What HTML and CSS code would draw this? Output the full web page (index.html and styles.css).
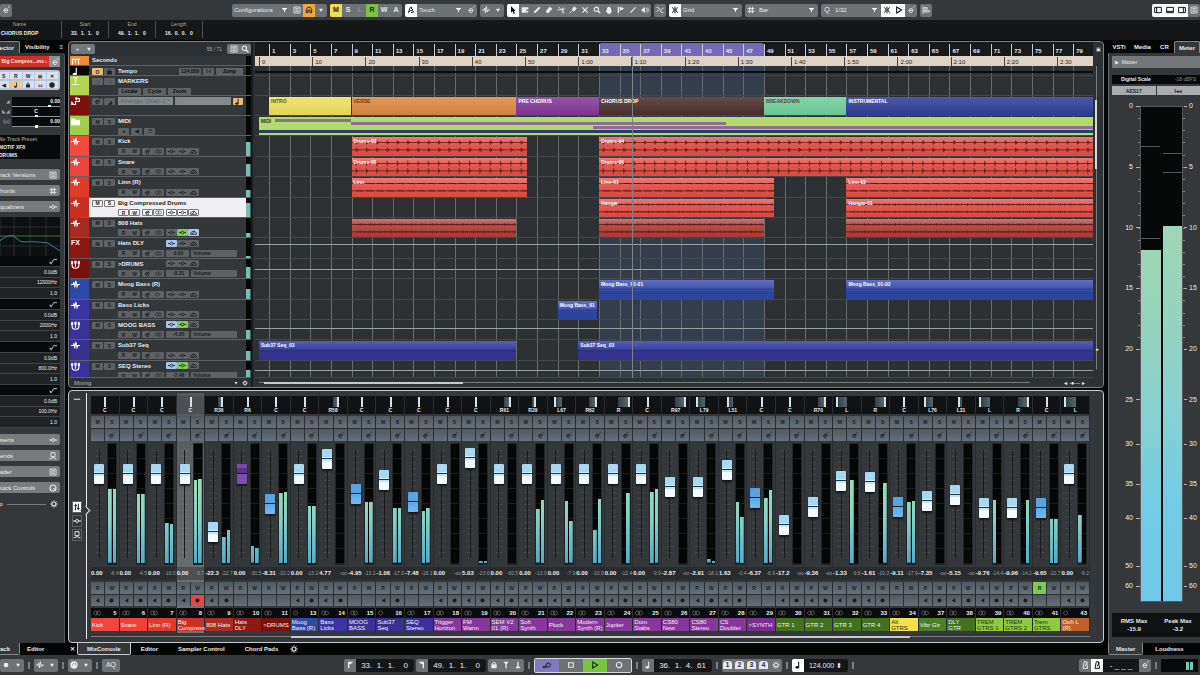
FILE: index.html
```
<!DOCTYPE html>
<html lang="en">
<head>
    <meta charset="UTF-8">
    <meta name="viewport" content="width=device-width, initial-scale=1.0">
    <title>Project - CHORUS DROP</title>
    <link rel="stylesheet" href="styles.css">
</head>
<body>
    <!-- Icon set -->
    <svg class="defs" aria-hidden="true">
        <symbol id="i-e" viewBox="0 0 12 12"><path d="M3 6.500H9A3 3 0 1 0 8.500 8.500M9 2l2-1" fill="none" stroke="currentColor" stroke-width="1.500"/></symbol>
        <symbol id="i-down" viewBox="0 0 12 12"><path d="M3 4h6L6 9z" fill="currentColor"/></symbol>
        <symbol id="i-list" viewBox="0 0 12 12"><path d="M1.500 1.500h9v9h-9zM3.500 4h5M3.500 6h5M3.500 8h5" fill="none" stroke="currentColor" stroke-width="1.300"/></symbol>
        <symbol id="i-house" viewBox="0 0 12 12"><path d="M2 10V5l2-3h4l2 3v5H7.500V6h-3v4z" fill="none" stroke="currentColor" stroke-width="1.500"/></symbol>
        <symbol id="i-auto" viewBox="0 0 12 12"><path d="M2 10 5 2l4 4-4 1M2 10l3-3M6 10l4-1-2-2M7 1v3" fill="none" stroke="currentColor" stroke-width="1.400"/></symbol>
        <symbol id="i-wave" viewBox="0 0 12 12"><path d="M0 6h3l1-3 1 7 1.500-9L8 9l1-3h3" fill="none" stroke="currentColor" stroke-width="1.400"/></symbol>
        <symbol id="i-arrow" viewBox="0 0 12 12"><path d="M3 0v10l2.500-2L7 12l2-1-1.500-3.500H10z" fill="currentColor"/></symbol>
        <symbol id="i-range" viewBox="0 0 12 12"><path d="M1 2h10v3H8v5H1z" fill="currentColor"/><path d="m8 6 4 3-2 .5L9 12z" fill="currentColor"/></symbol>
        <symbol id="i-pencil" viewBox="0 0 12 12"><path d="M1 11l1-3 7-7 2 2-7 7z" fill="currentColor"/></symbol>
        <symbol id="i-eraser" viewBox="0 0 12 12"><path d="M1 8 7 1l4 3-6 7H3z" fill="currentColor"/></symbol>
        <symbol id="i-cut" viewBox="0 0 12 12"><path d="M2 1l7 7M1 6l9-1" stroke="currentColor" stroke-width="1.300"/><circle cx="9.500" cy="4.500" r="1.500" fill="none" stroke="currentColor"/><circle cx="9" cy="9.500" r="1.500" fill="none" stroke="currentColor"/></symbol>
        <symbol id="i-glue" viewBox="0 0 12 12"><path d="M1 11l4-5M5 5l3-4 3 3-4 4z" fill="currentColor" stroke="currentColor" stroke-width="1.200"/></symbol>
        <symbol id="i-x" viewBox="0 0 12 12"><path d="M2 2l8 8M10 2l-8 8" stroke="currentColor" stroke-width="1.800"/></symbol>
        <symbol id="i-zoom" viewBox="0 0 12 12"><circle cx="5" cy="5" r="3.300" fill="none" stroke="currentColor" stroke-width="1.600"/><path d="M7.500 7.500 11 11" stroke="currentColor" stroke-width="2"/></symbol>
        <symbol id="i-hand" viewBox="0 0 12 12"><path d="M3 6V3l1-.5V1.500L5.500 1 7 1.200l1 1 1 .8v4l2-1-2 4-1 1.500H4.500L1 7l1-.5z" fill="currentColor"/></symbol>
        <symbol id="i-comp" viewBox="0 0 12 12"><path d="M1 1h2v10H1zM4 1l7 2.500L4 8z" fill="currentColor"/></symbol>
        <symbol id="i-line" viewBox="0 0 12 12"><path d="M2 10l8-8" stroke="currentColor" stroke-width="1.800"/></symbol>
        <symbol id="i-speaker" viewBox="0 0 12 12"><path d="M1 4h2l3-3v10L3 8H1z" fill="currentColor"/><path d="M8 3q2 3 0 6M10 2q2.500 4 0 8" fill="none" stroke="currentColor"/></symbol>
        <symbol id="i-cross" viewBox="0 0 12 12"><path d="M1 2q4 0 5 4t5 4M1 8l3-2M8 5l3-2" fill="none" stroke="currentColor" stroke-width="1.400"/></symbol>
        <symbol id="i-snap" viewBox="0 0 12 12"><path d="M6 1v10M2 2l3 4-3 4M10 2 7 6l3 4" fill="none" stroke="currentColor" stroke-width="1.500"/></symbol>
        <symbol id="i-grid" viewBox="0 0 12 12"><path d="M4 1v10M8 1v10M1 4h10M1 8h10" stroke="currentColor" stroke-width="1.400"/></symbol>
        <symbol id="i-play" viewBox="0 0 12 12"><path d="M2.500 1.500 10 6l-7.500 4.500z" fill="none" stroke="currentColor" stroke-width="1.600"/></symbol>
        <symbol id="i-align" viewBox="0 0 12 12"><path d="M1.500 0v12M3 2.500h5v2H3zM3 7h8v2H3z" fill="none" stroke="currentColor" stroke-width="1.300"/></symbol>
        <symbol id="i-zl" viewBox="0 0 12 12"><path d="M1 2h10v8H1zM4 2v8" fill="none" stroke="currentColor" stroke-width="1.500"/></symbol>
        <symbol id="i-zb" viewBox="0 0 12 12"><path d="M1 2h10v8H1zM1 8h10" fill="none" stroke="currentColor" stroke-width="1.500"/></symbol>
        <symbol id="i-zr" viewBox="0 0 12 12"><path d="M1 2h10v8H1zM8 2v8" fill="none" stroke="currentColor" stroke-width="1.500"/></symbol>
        <symbol id="i-gear" viewBox="0 0 12 12"><circle cx="6" cy="6" r="3" fill="none" stroke="currentColor" stroke-width="1.800"/><path d="M6 0v2M6 10v2M0 6h2M10 6h2M2 2l1.500 1.500M8.500 8.500 10 10M10 2 8.500 3.500M3.500 8.500 2 10" stroke="currentColor"/></symbol>
        <symbol id="i-knob" viewBox="0 0 12 12"><circle cx="6" cy="6" r="4.500" fill="none" stroke="currentColor" stroke-width="1.600"/><path d="M6 6l3 2" stroke="currentColor" stroke-width="1.600"/></symbol>
        <symbol id="i-midi" viewBox="0 0 12 12"><circle cx="6" cy="6" r="5.500" fill="currentColor"/><path d="M3 6h1M4.500 4h1M8 4h1M8.500 6h1" stroke="#444" stroke-width="1.400"/></symbol>
        <symbol id="i-note" viewBox="0 0 12 12"><path d="M7 1v8" stroke="currentColor" stroke-width="1.600"/><ellipse cx="5" cy="9.500" rx="2.800" ry="2" fill="currentColor"/></symbol>
        <symbol id="i-folder" viewBox="0 0 12 12"><path d="M0 2h5l1 1.500h6V11H0z" fill="currentColor"/></symbol>
        <symbol id="i-group" viewBox="0 0 12 12"><path d="M1.500 1v6q0 4 4.500 4t4.500-4V1M6 5v4" fill="none" stroke="currentColor" stroke-width="1.500"/><path d="M0 2h3v3H0zM4.500 1h3v4h-3zM9 2h3v3H9z" fill="currentColor"/></symbol>
        <symbol id="i-arranger" viewBox="0 0 12 12"><path d="M1 6v4h5V6h5V2H6M8 0 6 2l2 2M3 8l-2 2" fill="none" stroke="currentColor" stroke-width="1.500"/></symbol>
        <symbol id="i-ruler" viewBox="0 0 12 12"><path d="M1 3h11M2 3v7M6 3v5M10 3v7" fill="none" stroke="currentColor" stroke-width="1.600"/></symbol>
        <symbol id="i-marker" viewBox="0 0 12 12"><path d="M6 1v7M3 1h6M2 10h8" fill="none" stroke="currentColor" stroke-width="1.600"/></symbol>
        <symbol id="i-dot" viewBox="0 0 12 12"><circle cx="6" cy="6" r="3.500" fill="currentColor"/></symbol>
        <symbol id="i-left" viewBox="0 0 12 12"><path d="M9 2v8L3 6z" fill="currentColor"/></symbol>
        <symbol id="i-eq" viewBox="0 0 12 12"><path d="M0 6h3M9 6h3M3 6l3-2.500L9 6 6 8.500z" fill="none" stroke="currentColor" stroke-width="1.500"/></symbol>
        <symbol id="i-sq" viewBox="0 0 12 12"><path d="M2.500 2.500h7v7h-7z" fill="none" stroke="currentColor" stroke-width="1.600"/></symbol>
        <symbol id="i-rec" viewBox="0 0 12 12"><circle cx="6" cy="6" r="4" fill="none" stroke="currentColor" stroke-width="1.600"/></symbol>
        <symbol id="i-oo" viewBox="0 0 14 12"><circle cx="4.500" cy="6" r="3.500" fill="none" stroke="currentColor"/><circle cx="9.500" cy="6" r="3.500" fill="none" stroke="currentColor"/></symbol>
        <symbol id="i-o" viewBox="0 0 14 12"><circle cx="4.500" cy="6" r="3.500" fill="none" stroke="currentColor"/></symbol>
        <symbol id="i-send" viewBox="0 0 12 12"><path d="M3 1h6v6H3zM1 10h3l1-2h2l1 2h3" fill="none" stroke="currentColor" stroke-width="1.400"/></symbol>
        <symbol id="i-lane" viewBox="0 0 12 12"><path d="M1 9V7l3-3h4l3 3v2zM3 9l5-5" fill="none" stroke="currentColor" stroke-width="1.400"/></symbol>
        <symbol id="i-lock" viewBox="0 0 12 12"><path d="M2 5h8v6H2z" fill="currentColor"/><path d="M4 5V3q2-3 4 0v2" fill="none" stroke="currentColor" stroke-width="1.500"/></symbol>
        <symbol id="i-flag" viewBox="0 0 12 12"><path d="M3 1h8L7 5H5v6H3z" fill="currentColor"/></symbol>
        <symbol id="i-flag2" viewBox="0 0 12 12"><path d="M9 1H1l4 4h2v6h2z" fill="currentColor"/></symbol>
        <symbol id="i-punch" viewBox="0 0 12 12"><path d="M2 1h8L6 6zM5 5h2v6H5z" fill="currentColor"/></symbol>
        <symbol id="i-cycle" viewBox="0 0 12 12"><path d="M1 9h7q3 0 3-3T8 3 5 6l-1 3M2 7 .5 9 2 11" fill="none" stroke="currentColor" stroke-width="1.500"/></symbol>
        <symbol id="i-metro" viewBox="0 0 12 12"><path d="M3 11 5 1h3l2 10zM6 8l4-6" fill="none" stroke="currentColor" stroke-width="1.500"/></symbol>
        <symbol id="i-faders" viewBox="0 0 12 12"><path d="M4 1v10M8 1v10M2 4h4M6 8h4" stroke="currentColor" stroke-width="1.500"/></symbol>
        <symbol id="i-shelf" viewBox="0 0 12 12"><path d="M1 9h3l3-5h5M1 7l3 4" fill="none" stroke="currentColor" stroke-width="1.200"/></symbol>
    </svg>

    <div class="app">
        <!-- Project toolbar -->
        <header class="toolbar">
            <div class="group"><button aria-label="Edit"><svg><use href="#i-e"/></svg></button></div>
            <div class="toolbar-main">
                <div class="group">
                    <select class="w-config" aria-label="Configurations"><option>Configurations</option></select>
                    <button aria-label="Setup"><svg><use href="#i-list"/></svg></button>
                    <button class="orange" aria-label="Constrain delay"><svg><use href="#i-house"/></svg></button>
                    <button aria-label="More"><svg><use href="#i-down"/></svg></button>
                </div>
                <div class="group">
                    <button class="yellow">M</button><button>S</button><button class="dim">L</button><button class="green">R</button><button>W</button><button>A</button>
                </div>
                <div class="group">
                    <button class="on" aria-label="Automation mode"><svg><use href="#i-auto"/></svg></button>
                    <select class="w-mid" aria-label="Automation"><option>Touch</option></select>
                    <button aria-label="Automation panel"><svg><use href="#i-e"/></svg></button>
                </div>
                <div class="group">
                    <button aria-label="Nudge"><svg><use href="#i-wave"/></svg></button>
                    <button aria-label="More"><svg><use href="#i-down"/></svg></button>
                </div>
                <div class="group">
                    <button class="on" aria-label="Select"><svg><use href="#i-arrow"/></svg></button>
                    <button aria-label="Range"><svg><use href="#i-range"/></svg></button>
                    <button aria-label="Draw"><svg><use href="#i-pencil"/></svg></button>
                    <button aria-label="Erase"><svg><use href="#i-eraser"/></svg></button>
                    <button aria-label="Split"><svg><use href="#i-cut"/></svg></button>
                    <button aria-label="Glue"><svg><use href="#i-glue"/></svg></button>
                    <button aria-label="Mute"><svg><use href="#i-x"/></svg></button>
                    <button aria-label="Zoom"><svg><use href="#i-zoom"/></svg></button>
                    <button aria-label="Hand"><svg><use href="#i-hand"/></svg></button>
                    <button aria-label="Comp"><svg><use href="#i-comp"/></svg></button>
                    <button aria-label="Line"><svg><use href="#i-line"/></svg></button>
                    <button aria-label="Play"><svg><use href="#i-speaker"/></svg></button>
                </div>
                <div class="group"><button aria-label="Zero crossing"><svg><use href="#i-cross"/></svg></button></div>
                <div class="group">
                    <button class="on" aria-label="Snap"><svg><use href="#i-snap"/></svg></button>
                    <select class="w-long" aria-label="Snap type"><option>Grid</option></select>
                </div>
                <div class="group">
                    <button aria-label="Grid"><svg><use href="#i-grid"/></svg></button>
                    <select class="w-long" aria-label="Grid type"><option>Bar</option></select>
                </div>
                <div class="group">
                    <button class="light">Q</button>
                    <select class="w-mid" aria-label="Quantize"><option>1/32</option></select>
                    <button class="on" aria-label="Iterative"><svg><use href="#i-snap"/></svg></button>
                    <button class="on" aria-label="Apply"><svg><use href="#i-play"/></svg></button>
                    <button aria-label="Quantize panel"><svg><use href="#i-e"/></svg></button>
                </div>
                <div class="group"><button aria-label="Align"><svg><use href="#i-align"/></svg></button></div>
            </div>
            <div class="group">
                <button class="on" aria-label="Left zone"><svg><use href="#i-zl"/></svg></button>
                <button class="on" aria-label="Lower zone"><svg><use href="#i-zb"/></svg></button>
                <button class="on" aria-label="Right zone"><svg><use href="#i-zr"/></svg></button>
                <button aria-label="Layout"><svg><use href="#i-list"/></svg></button>
            </div>
        </header>

        <dl class="info">
            <div class="info-name"><dt>Name</dt><dd>CHORUS DROP</dd></div>
            <div><dt>Start</dt><dd>33. &nbsp;1. &nbsp;1. &nbsp; 0</dd></div>
            <div><dt>End</dt><dd>49. &nbsp;1. &nbsp;1. &nbsp; 0</dd></div>
            <div><dt>Length</dt><dd>16. &nbsp;0. &nbsp;0. &nbsp; 0</dd></div>
        </dl>

        <main>
            <!-- Left zone -->
            <aside class="inspector">
                <nav class="tabs"><button class="active">Inspector</button><button>Visibility</button><span>≡</span></nav>
                <div class="inspector-body">
                    <div class="track-title"><span>Big Compres...ms ›</span><button aria-label="Edit channel"><svg><use href="#i-e"/></svg></button></div>
                    <div class="track-buttons">
                        <button>M</button><button>S</button><button>R</button><button>W</button><button>⊟</button><button>✕</button>
                        <button>●</button><button>◀</button><button class="gold" aria-label="Musical"><svg><use href="#i-note"/></svg></button><button aria-label="Lock"><svg><use href="#i-lock"/></svg></button><button>▭</button><button aria-label="Freeze"><svg><use href="#i-midi"/></svg></button>
                    </div>
                    <div class="track-levels">
                        <span>◢</span><div><b>0.00</b><i class="lv-hi"></i></div>
                        <span>◣◢</span><div class="center"><b>C</b><i class="lv-mid"></i></div>
                        <span>(◎)</span><div><b>0.00</b><i class="lv-mid"></i></div>
                    </div>
                    <ul class="preset"><li>No Track Preset</li><li>MOTIF XF8</li><li>DRUMS</li></ul>
                    <button class="section">Track Versions<svg><use href="#i-list"/></svg></button>
                    <button class="section">Chords<svg><use href="#i-grid"/></svg></button>
                    <button class="section">Equalizers<svg><use href="#i-eq"/></svg></button>
                    <svg class="eq-curve" viewBox="0 0 76 39" preserveAspectRatio="none">
                        <path class="eq-grid" d="M16 0V39M30 0V39M46 0V39M62 0V39M0 10H76M0 29H76"/>
                        <path class="eq-zero" d="M0 19H76"/>
                        <path class="eq-line" d="M0 34Q12 26 20 21T32 21T42 25T64 26L76 34"/>
                    </svg>
                    <ul class="eq-bands" id="eq-bands"></ul>
                    <button class="section">Inserts<svg><use href="#i-eq"/></svg></button>
                    <button class="section">Sends<svg><use href="#i-send"/></svg></button>
                    <button class="section">Fader<svg><use href="#i-list"/></svg></button>
                    <button class="section">Quick Controls<svg><use href="#i-knob"/></svg></button>
                    <div class="inspector-foot"><span>Top</span><hr><svg><use href="#i-gear"/></svg></div>
                </div>
                <nav class="tabs tabs-bottom"><button class="active">Track</button><button>Editor</button></nav>
            </aside>

            <div class="center-zone">
                <!-- Project window -->
                <section class="project">
                    <div class="tracklist">
                        <div class="tracklist-head">
                            <span class="mini"><button>+</button><button aria-label="Presets"><svg><use href="#i-down"/></svg></button></span>
                            <span class="count">55 / 71</span>
                            <span class="mini"><button aria-label="Visibility"><svg><use href="#i-list"/></svg></button><button aria-label="Find"><svg><use href="#i-zoom"/></svg></button></span>
                        </div>
                        <div class="rows" id="tracks"></div>
                        <div class="tracklist-foot"><span>Mixing</span><svg><use href="#i-down"/></svg><svg><use href="#i-gear"/></svg></div>
                    </div>
                    <div class="timeline" id="timeline">
                        <div class="bar-ruler" id="bar-ruler"></div>
                        <div class="rows lanes" id="lanes"></div>
                        <div class="hscroll"><i></i><span>◂ -●— ▸</span></div>
                    </div>
                    <div class="vscroll"><button aria-label="Split window">▣</button><i></i><span>●</span></div>
                </section>

                <!-- MixConsole -->
                <section class="mixer">
                    <div class="mixer-side">
                        <button>•••</button>
                        <div>
                            <button class="side-on" aria-label="Faders"><svg><use href="#i-faders"/></svg></button>
                            <button class="side" aria-label="Inserts"><svg><use href="#i-eq"/></svg></button>
                            <button class="side" aria-label="Sends"><svg><use href="#i-send"/></svg></button>
                        </div>
                    </div>
                    <div class="console">
                        <div class="channels" id="channels"></div>
                        <div class="mixer-scroll"><i></i></div>
                    </div>
                </section>
                <nav class="tabs mixer-tabs">
                    <button class="close">✕</button><button class="active">MixConsole</button><button>Editor</button><button>Sampler Control</button><button>Chord Pads</button><button class="tab-gear" aria-label="Settings"><svg><use href="#i-gear"/></svg></button>
                </nav>
            </div>

            <!-- Right zone -->
            <aside class="right-zone">
                <nav class="tabs"><button>VSTi</button><button>Media</button><button>CR</button><button class="active">Meter</button></nav>
                <div class="right-body">
                    <button class="master-title">▶ &nbsp;Master</button>
                    <div class="scale-title"><b>Digital Scale</b><span>-18 dBFS</span></div>
                    <div class="scale-buttons"><button>AES17</button><button>I◂◂</button></div>
                    <div class="master-meter" id="master-meter">
                        <div class="master-bars"><i class="left"></i><i class="right"></i></div>
                    </div>
                    <dl class="peaks"><div><dt>RMS Max</dt><dd>-15.9</dd></div><div><dt>Peak Max</dt><dd>-3.2</dd></div></dl>
                </div>
                <nav class="tabs tabs-bottom"><button class="active">Master</button><button>Loudness</button></nav>
            </aside>
        </main>

        <!-- Transport bar -->
        <footer class="transport">
            <div class="transport-part">
                <div class="group"><button aria-label="Record mode"><svg><use href="#i-dot"/></svg></button><button aria-label="More"><svg><use href="#i-down"/></svg></button></div><s></s>
                <div class="group"><button aria-label="Audio mode"><svg><use href="#i-wave"/></svg></button><button aria-label="More"><svg><use href="#i-down"/></svg></button></div><s></s>
                <div class="group"><button aria-label="Midi mode"><svg><use href="#i-midi"/></svg></button><button aria-label="More"><svg><use href="#i-down"/></svg></button></div><s></s>
                <div class="group"><button class="aq">AQ</button></div>
            </div>
            <div class="transport-part">
                <div class="group"><button aria-label="Left locator"><svg><use href="#i-flag"/></svg></button><output>33. &nbsp;1. &nbsp;1. &nbsp; &nbsp;0</output></div>
                <div class="group"><button aria-label="Right locator"><svg><use href="#i-flag2"/></svg></button><output>49. &nbsp;1. &nbsp;1. &nbsp; &nbsp;0</output></div>
                <div class="group"><button aria-label="Lock"><svg><use href="#i-lock"/></svg></button><button aria-label="Punch in"><svg><use href="#i-punch"/></svg></button><button aria-label="Punch out"><svg class="flip"><use href="#i-punch"/></svg></button></div><s></s>
                <div class="group play">
                    <button class="violet" aria-label="Cycle"><svg><use href="#i-cycle"/></svg></button>
                    <button aria-label="Stop"><svg><use href="#i-sq"/></svg></button>
                    <button class="green" aria-label="Play"><svg><use href="#i-play"/></svg></button>
                    <button aria-label="Record"><svg><use href="#i-rec"/></svg></button>
                </div><s></s>
                <div class="group"><button aria-label="Time format"><svg><use href="#i-note"/></svg></button><output>36. &nbsp;1. &nbsp;4. &nbsp;61</output></div><s></s>
                <div class="group markers"><button><b>1</b></button><button><b>2</b></button><button><b>3</b></button><button><b>4</b></button><button aria-label="Markers"><svg><use href="#i-gear"/></svg></button></div><s></s>
                <div class="group"><button class="on" aria-label="Tempo"><svg><use href="#i-note"/></svg></button><output class="tempo">124.000 ⬍</output></div><s></s>
            </div>
            <div class="transport-part transport-right">
                <div class="group"><button aria-label="Precount"><svg><use href="#i-metro"/></svg></button><button class="on" aria-label="Click"><svg><use href="#i-metro"/></svg></button><output class="click">- _ _ _</output><button aria-label="Click setup"><svg><use href="#i-e"/></svg></button></div><s></s>
                <div class="out-meter"><i></i><i></i></div>
            </div>
        </footer>
    </div>
    <script src="script.js"></script>
</body>
</html>
```

FILE: styles.css
```
* {
    box-sizing: border-box;
}
body {
    margin: 0;
    background: #050606;
    color: #e9ebec;
    font-family: "Liberation Sans", Arial, sans-serif;
    font-size: 6px;
    line-height: 8px;
    overflow: hidden;
}
button, select, input, output {
    font: inherit;
    color: inherit;
    border: 0;
    padding: 0;
    margin: 0;
    background: none;
}
button {
    display: flex;
    align-items: center;
    justify-content: center;
    white-space: nowrap;
    overflow: hidden;
}
ul, dl, dd {
    margin: 0;
    padding: 0;
    list-style: none;
}
svg {
    width: 8px;
    height: 8px;
    flex: none;
}
.defs {
    display: none;
}
.app {
    height: 100vh;
    min-height: 640px;
    display: grid;
    grid-template-rows: 20px 20px minmax(0, 1fr) 20px;
}

/* toolbar */
.toolbar {
    display: flex;
    justify-content: space-between;
    align-items: center;
    background: #34383a;
}
.toolbar-main, .transport-part {
    display: flex;
    align-items: center;
    gap: 3px;
}
.group {
    display: flex;
    height: 13px;
    background: #6e7274;
    border-radius: 2px;
    overflow: hidden;
    font-size: 7px;
    font-weight: bold;
}
.group button {
    width: 12px;
    height: 13px;
}
.group button.on {
    background: #fff;
    color: #111;
}
.group button.orange {
    background: #f2a73b;
    color: #222;
}
.group button.yellow {
    background: #eddd4f;
    color: #222;
}
.group button.green {
    background: #76c442;
    color: #12300a;
}
.group button.violet {
    background: #8378bd;
    color: #15132a;
}
.group button.dim {
    color: #8b8f91;
}
.group button.light {
    font-weight: normal;
}
select {
    appearance: none;
    height: 13px;
    padding: 0 2px;
    font-size: 6px;
    font-weight: normal;
    background: conic-gradient(from -32deg at 50% 100%, #eee 64deg, transparent 0) no-repeat right 4px center / 5px 4px;
}
.w-config {
    width: 59px;
}
.w-mid {
    width: 48px;
}
.w-long {
    width: 61px;
}

/* info line */
.info {
    display: flex;
    background: #151718;
    text-align: center;
    padding-top: 1px;
}
.info div {
    width: 47px;
    height: 17px;
    border-right: 1px solid #4b4f51;
}
.info .info-name {
    width: 62px;
    padding-right: 22px;
}
.info dt {
    font-size: 5px;
    line-height: 7px;
    color: #a8abad;
}
.info dd {
    font-size: 5px;
    font-weight: bold;
    line-height: 10px;
    white-space: nowrap;
}

main {
    display: grid;
    grid-template-columns: 66px minmax(0, 1fr) 94px;
    min-height: 0;
    background: #050606;
}

/* tabs */
.tabs {
    display: flex;
    height: 12px;
    align-items: center;
    font-weight: bold;
    background: #050606;
}
.tabs button {
    height: 12px;
    padding: 0 7px;
}
.tabs .active {
    background: #34383a;
    border: 1px solid #84888a;
    border-bottom: 0;
    border-radius: 2px 2px 0 0;
}
.tabs-bottom .active, .mixer-tabs .active {
    border: 1px solid #84888a;
    border-top: 0;
    border-radius: 0 0 2px 2px;
}

/* inspector */
.inspector {
    margin-left: -16px;
    padding-top: 1px;
    display: flex;
    flex-direction: column;
    min-height: 0;
}
.inspector .tabs button {
    padding: 0 5px;
}
.inspector .tabs .active {
    width: 36px;
    justify-content: flex-end;
}
.inspector .tabs span {
    margin-left: auto;
    padding-right: 3px;
}
.inspector .tabs-bottom .active {
    padding-right: 9px;
}
.inspector .tabs-bottom button {
    padding-left: 7px;
}
.inspector-body {
    flex: 1;
    min-height: 0;
    background: #34383a;
    padding: 3px 4px 0 0;
    margin-right: 1px;
    border-right: 1px solid #55595b;
    border-radius: 0 3px 0 0;
}
.track-title {
    display: flex;
    height: 11px;
    margin-bottom: 3px;
}
.track-title span {
    flex: 1;
    padding-right: 2px;
    background: #d32f22;
    text-align: right;
    font-size: 5px;
    line-height: 11px;
    font-weight: bold;
    white-space: nowrap;
}
.track-title button {
    width: 11px;
    background: #8c9092;
}
.track-buttons {
    display: grid;
    grid-template-columns: repeat(6, 1fr);
    gap: 2px 1px;
    padding: 2px;
    height: 20px;
    background: #b9c5dc;
    border-radius: 3px;
    margin-bottom: 7px;
}
.track-buttons button {
    font-size: 5px;
    font-weight: bold;
    color: #222;
    background: #d9e0ec;
}
.track-buttons svg {
    width: 6px;
    height: 6px;
}
.track-buttons .gold {
    background: #f0cb80;
}
.track-levels {
    display: grid;
    grid-template-columns: 26px 1fr;
    grid-auto-rows: 10px;
    margin-bottom: 8px;
    font-size: 5px;
    text-align: right;
    color: #a2a6a8;
    column-gap: 2px;
}
.track-levels div {
    background: #0a0b0c;
    border-bottom: 1px solid #8b8f91;
    color: #eee;
    position: relative;
}
.track-levels .center {
    text-align: center;
}
.track-levels i {
    position: absolute;
    bottom: -2px;
    width: 3px;
    height: 3px;
    background: #fff;
}
.lv-hi {
    left: 75%;
}
.lv-mid {
    left: 48%;
}
.preset {
    background: #08090a;
    margin-bottom: 10px;
    padding-left: 15px;
    font-size: 5px;
    line-height: 8px;
    height: 24px;
}
.preset li:first-child {
    color: #909496;
}
.preset li {
    font-weight: bold;
    white-space: nowrap;
}
.section {
    width: 100%;
    height: 11px;
    margin-bottom: 5px;
    padding: 0 3px 0 12px;
    justify-content: space-between;
    background: #777b7d;
    border-radius: 2px;
}
.eq-curve {
    display: block;
    width: 100%;
    height: 39px;
    background: #0d0f10;
}
.eq-grid {
    stroke: #2b2f31;
    fill: none;
}
.eq-zero {
    stroke: #3d7a34;
    fill: none;
}
.eq-line {
    stroke: #3e7f9d;
    fill: none;
}
.eq-bands {
    display: grid;
    grid-template-rows: repeat(16, 1fr);
    height: 172px;
    margin-bottom: 6px;
}
.eq-bands li {
    display: flex;
    align-items: center;
    justify-content: flex-end;
    padding-right: 3px;
    font-size: 5px;
    border-bottom: 1px solid #3f4345;
    background: #202325;
}
.eq-bands .band {
    background: #08090a;
}
.inspector-foot {
    display: flex;
    align-items: center;
    gap: 4px;
    padding: 2px 2px 0 9px;
}
.inspector-foot hr {
    flex: 1;
    margin: 0;
    border: 0;
    border-top: 1px solid #777b7d;
}

.center-zone {
    display: grid;
    grid-template-rows: minmax(0, 1fr) 253px 12px;
    padding: 0 2px;
    min-width: 0;
    min-height: 0;
}

/* project */
.project {
    display: grid;
    grid-template-columns: 183px minmax(0, 1fr) 9px;
    column-gap: 1px;
    margin: 1px 0 2px;
    border: 1px solid #7b7f81;
    padding-left: 1px;
    border-radius: 4px;
    background: #2d3133;
    min-height: 0;
    overflow: hidden;
}
.tracklist, .timeline {
    display: grid;
    grid-template-rows: 14px minmax(0, 1fr) 9px;
    min-height: 0;
    min-width: 0;
}
.tracklist {
    border-right: 2px solid #1a1c1d;
}
.timeline {
    margin-left: 1px;
    overflow: hidden;
}
.rows {
    display: grid;
    grid-template-rows: 10px 10px 20px 20px repeat(12, minmax(0, 20fr)) minmax(0, 17fr);
    min-height: 0;
}
.tracklist-head {
    display: flex;
    align-items: center;
    gap: 4px;
}
.mini {
    display: flex;
    height: 10px;
    background: #74787a;
    border-radius: 2px;
    padding: 0 1px;
    margin-left: 1px;
}
.mini button {
    width: 11px;
}
.count {
    margin-left: auto;
    font-size: 5px;
    color: #aaadaf;
}
.tracklist-foot {
    display: flex;
    align-items: center;
    gap: 3px;
    padding-right: 3px;
}
.tracklist-foot svg {
    width: 6px;
    height: 6px;
}
.tracklist-foot span {
    flex: 1;
    padding-left: 4px;
    color: #b4b7b9;
}
.track {
    display: grid;
    grid-template-columns: 19px 23px minmax(0, 1fr) 5px;
    column-gap: 3px;
    border-bottom: 1px solid #5c6062;
    background: #33373a;
    overflow: hidden;
    min-height: 0;
}
.track-color {
    padding: 1px 0 0 1px;
    color: #fff;
    font-size: 7px;
    font-weight: bold;
    margin-bottom: -1px;
}
.track-color svg {
    width: 9px;
    height: 9px;
}
.ms {
    display: flex;
    gap: 1px;
    padding-top: 2px;
}
.track-line {
    display: flex;
    gap: 2px;
    height: 10px;
    align-items: center;
    white-space: nowrap;
}
.track-line b {
    min-width: 46px;
}
.track-line .tempo-name {
    min-width: 59px;
}
.track button, .cell {
    width: 11px;
    height: 7px;
    font-size: 5px;
    font-weight: bold;
    color: #1b1d1e;
    background: #5e6264;
    border-radius: 1px;
}
.track button svg {
    width: 7px;
    height: 7px;
}
.track select {
    width: 59px;
    height: 8px;
    color: #606466;
    background: #85898b;
}
.btns {
    display: flex;
}
.track .cell {
    width: 46px;
    padding-left: 2px;
    line-height: 7px;
}
.track .val {
    width: 23px;
    text-align: center;
}
.track .blue {
    background: #a9c4ee;
}
.track .lime {
    background: #7ecb5c;
}
.track .gold {
    background: #eab97e;
}
.track .wide {
    width: 23px;
    color: #0b0c0c;
}
.track .jump {
    width: 28px;
}
.track.selected {
    background: #f1eff0;
    color: #222;
}
.track.selected button {
    background: #f8f8f8;
    border: 1px solid #777;
}
.track-meter {
    display: flex;
    align-items: flex-end;
    background: #060707;
}
.track-meter i {
    width: 100%;
    background: #76bdb5;
    border-right: 1px solid #38605b;
}

/* timeline */
.bar-ruler, .lane {
    position: relative;
    min-height: 0;
}
.bar-ruler {
    background: #17191b;
}
.bar-ruler span, .seconds span {
    position: absolute;
    top: 2px;
    bottom: 0;
    padding-left: 2px;
    border-left: 1px solid #c9cccd;
    line-height: 15px;
    font-weight: bold;
}
.bar-ruler .cycle {
    position: absolute;
    top: 1px;
    bottom: 0;
    background: #7369b5;
    border-radius: 3px 3px 0 0;
}
.lane {
    border-bottom: 1px solid #44484a;
}
.lane.seconds {
    background: #ddd2c4;
    border: 0;
    overflow: hidden;
}
.seconds span {
    top: 1px;
    font-weight: normal;
    line-height: 10px;
    color: #222;
    border-color: #444;
}
.lanes {
    position: relative;
}
.gridline, .cycle-area, .playhead {
    position: absolute;
    top: 10px;
    bottom: 0;
    width: 1px;
    background: #666b6d;
}
.cycle-area {
    background: #343d4b;
    width: auto;
}
.playhead {
    top: 0;
    background: #7d8284;
}
.automation {
    position: absolute;
    left: 0;
    right: 0;
    height: 1px;
    background: #9a9fa0;
}
.tempo-line {
    background: #0b0c0c;
    height: 2px;
}
.clip {
    position: absolute;
    top: 1px;
    bottom: 0;
    overflow: hidden;
    font-size: 5px;
    font-weight: bold;
    color: #fff;
    white-space: nowrap;
}
.clip span {
    position: relative;
    padding: 0 2px;
}
.clip svg {
    position: absolute;
    inset: 0;
    width: 100%;
    height: 100%;
}
.clip path {
    fill: none;
    stroke: rgba(80, 20, 20, .7);
    vector-effect: non-scaling-stroke;
}
.clip.red {
    background: linear-gradient(#ec7a75, #e0574f 45%, #d74b40);
}
.clip.dark {
    background: linear-gradient(#c77872 0, #b44f48 35%, #a93a31);
}
.clip.blue {
    background: linear-gradient(#6070c2, #3d51a8 55%, #2b449e 60%, #2b449e);
}
.clip.indigo {
    background: linear-gradient(#5560b8, #3c429f 45%, #2c2e80 50%, #35338f 60%, #33318f);
}
.clip.blue path, .clip.indigo path {
    stroke: #2c357e;
}
.clip.part {
    background: linear-gradient(rgba(255, 255, 255, .14), rgba(0, 0, 0, .05)), var(--part);
}
.clip.shade {
    color: rgba(60, 40, 20, .8);
}
.midi-part {
    background: #b3da70;
    color: #35451c;
}
.midi-part i {
    position: absolute;
    height: 3px;
    background: #8d6f8f;
}
.midi-part .navy {
    background: #2b3f68;
    border-top: 1px solid #b8c3b0;
    height: 4px;
}
.hscroll {
    display: flex;
    align-items: center;
    justify-content: space-between;
    padding-right: 8px;
    background: linear-gradient(#777b7d, #777b7d) no-repeat 4px 4px / 92% 1px;
}
.hscroll i {
    width: 24%;
    height: 2px;
    margin-left: 9px;
    background: #c6c9ca;
}
.vscroll {
    display: flex;
    flex-direction: column;
    align-items: center;
    font-size: 5px;
    padding-top: 3px;
    background: linear-gradient(#777b7d, #777b7d) no-repeat 2px 24px / 1px 88%;
}
.vscroll i {
    width: 2px;
    height: 69px;
    margin: 47px auto auto 1px;
    background: #d6d9da;
}
.vscroll span {
    margin: 0 3px 34px 0;
}

/* mixer */
.mixer {
    display: grid;
    grid-template-columns: 17px minmax(0, 1fr);
    gap: 4px;
    padding: 2px 13px 0 1px;
    background: #34383a;
    border: 1px solid #c8cccd;
    border-radius: 4px;
}
.mixer-side {
    border-right: 1px solid #e3e5e6;
    margin-bottom: 3px;
    display: grid;
    grid-template-rows: 108px auto;
    position: relative;
}
.mixer-side::after {
    content: "";
    position: absolute;
    right: -3px;
    top: 114px;
    width: 5px;
    height: 5px;
    border: 1px solid #e3e5e6;
    border-left-color: #34383a;
    border-bottom-color: #34383a;
    background: #34383a;
    transform: rotate(45deg);
}
.mixer-side > button {
    height: 12px;
    width: 14px;
}
.side, .side-on {
    width: 10px;
    height: 12px;
    margin: 0 0 2px 2px;
    border: 1px solid #5c6062;
}
.side-on {
    background: #fff;
    color: #222;
}
.channels {
    display: grid;
    grid-template-columns: repeat(35, minmax(0, 1fr));
}
.channel {
    display: grid;
    grid-template-rows: 18px 25px 122px 13px 24px 10px 13px;
    grid-template-columns: minmax(0, 1fr);
    row-gap: 2px;
    padding-top: 3px;
    border-right: 1px solid #2a2d2f;
    min-width: 0;
}
.channel.selected {
    background: linear-gradient(#54585a, #717476);
}
.pan {
    background: #111213;
    text-align: center;
    position: relative;
    padding-top: 11px;
    font-size: 5px;
    line-height: 7px;
    font-weight: bold;
}
.selected .pan {
    background: #4c5052;
}
.pan i {
    position: absolute;
    top: 1px;
    height: 10px;
    min-width: 2px;
    background: linear-gradient(90deg, #31414a, #56666e);
    border: 0 solid #d5e3e6;
}
.pan .r {
    left: 48%;
    border-right-width: 2px;
}
.pan .l {
    right: 48%;
    border-left-width: 2px;
}
.keys {
    display: grid;
    grid-template: repeat(2, 1fr) / repeat(2, 1fr);
    gap: 1px;
    background: #2b2f32;
}
.keys button {
    font-size: 5px;
    font-weight: bold;
    color: #1b1e20;
    background: linear-gradient(#515960, #66707a);
}
.keys svg {
    width: 7px;
    height: 7px;
}
.keys .rec {
    background: #e24940;
}
.keys .read {
    background: #7dcb52;
}
.strip {
    display: grid;
    grid-template-columns: 10px 10px;
    column-gap: 3px;
    padding-left: 3px;
}
.fader {
    appearance: none;
    writing-mode: vertical-lr;
    direction: rtl;
    width: 10px;
    height: 122px;
    background:
        linear-gradient(#191b1d, #191b1d) no-repeat center / 1px 108px,
        repeating-linear-gradient(rgba(200, 210, 215, .1) 0 1px, transparent 1px 6px) no-repeat center / 6px 108px;
}
.fader::-webkit-slider-thumb {
    appearance: none;
    width: 10px;
    height: 20px;
    border-radius: 1px;
    background: linear-gradient(#a7d8f2 0 40%, #d2ecf7 40% 47%, #234 47% 52%, #c3e6f6 52% 62%, #f2fafd 62%);
    box-shadow: 0 2px 2px #151718;
}
.fader.group-fader::-webkit-slider-thumb {
    background: linear-gradient(#5aa3e0 0 47%, #123 47% 52%, #5fa9e4 52%, #74baf0);
}
.fader.fx::-webkit-slider-thumb {
    background: linear-gradient(#7b4aa8 0 20%, #5c338a 20% 47%, #213 47% 52%, #7c4dad 52%);
}
.meter {
    display: flex;
    align-items: flex-end;
    gap: 1px;
    padding-bottom: 1px;
    border: 1px solid #222527;
    background: repeating-linear-gradient(#050606 0 14px, #191b1c 14px 15px);
}
.meter i {
    flex: 1;
    background: linear-gradient(#9fe0b4, #88d2c4 50%, #55abc8) no-repeat bottom / 100% 90px;
}
.values {
    display: flex;
    justify-content: space-between;
    line-height: 13px;
    background: #292c2f;
    white-space: nowrap;
}
.values span {
    font-size: 5px;
    color: #9a9ea0;
}
.selected .values {
    background: #4c5052;
}
.chan-num {
    display: flex;
    justify-content: space-between;
    align-items: center;
    padding: 0 2px;
    font-weight: bold;
    background: #0a0b0c;
}
.chan-num svg {
    color: #82868a;
}
.chan-name {
    display: flex;
    align-items: center;
    height: 13px;
    padding-left: 1px;
    margin-top: -2px;
    line-height: 6px;
    white-space: pre;
}
.mixer-scroll {
    margin-top: 3px;
    border-top: 1px solid #777b7d;
}
.mixer-scroll i {
    display: block;
    width: 62%;
    height: 2px;
    margin: -1px 0 0 20%;
    background: #c6c9ca;
}
.mixer-tabs button {
    padding: 0 10px;
}
.mixer-tabs .active {
    padding: 0 9px;
    border-color: #c8cccd;
}
.mixer-tabs .close {
    padding: 0 2px;
}
.mixer-tabs .tab-gear {
    padding: 0 2px;
}

/* right zone */
.right-zone {
    display: flex;
    flex-direction: column;
    min-height: 0;
    padding: 1px 0 0 2px;
    overflow: hidden;
}
.right-zone .tabs-bottom button {
    padding: 0 12px;
}
.right-zone .tabs-bottom .active {
    padding: 0 7px;
}
.right-body {
    flex: 1;
    display: flex;
    flex-direction: column;
    min-height: 0;
    padding: 3px 0 6px 3px;
    background: #34383a;
    border-left: 1px solid #666a6c;
}
.master-title {
    height: 12px;
    justify-content: flex-start;
    padding-left: 3px;
    font-size: 5px;
    background: #74787a;
}
.scale-title {
    display: flex;
    justify-content: space-between;
    margin-top: 7px;
    padding: 0 4px 0 9px;
    font-size: 5px;
    line-height: 9px;
    background: #08090a;
    white-space: nowrap;
}
.scale-title span {
    color: #85898b;
}
.scale-buttons {
    display: grid;
    grid-template-columns: 1fr 1fr;
    gap: 1px;
    margin: 2px 0 11px;
}
.scale-buttons button {
    height: 9px;
    font-size: 5px;
    font-weight: bold;
    color: #222;
    background: #a9acae;
}
.master-meter {
    flex: 1;
    position: relative;
    min-height: 0;
    font-size: 7px;
}
.master-bars {
    position: absolute;
    inset: 0 17px 0 28px;
    display: grid;
    grid-template-columns: 1fr 1fr;
    gap: 2px;
    border: 1px solid #55595b;
    background: #070808;
}
.master-bars i {
    align-self: end;
    background: linear-gradient(#9fd6b6, #93d2c0 30%, #88d0d2 48%, #72cce6 75%, #6fc9e6);
}
.master-bars .left {
    height: 71%;
}
.master-bars .right {
    height: 76%;
}
.mark {
    position: absolute;
    left: 0;
    right: -1px;
    display: flex;
    justify-content: space-between;
    align-items: center;
    height: 8px;
    margin-top: -4px;
}
.mark span {
    width: 21px;
    text-align: right;
}
.mark span:last-child {
    width: 12px;
    text-align: left;
}
.mark::before, .mark::after, .tick::before, .tick::after {
    content: "";
    position: absolute;
    left: 24px;
    width: 4px;
    height: 1px;
    background: #aeb2b4;
}
.mark::after, .tick::after {
    left: auto;
    right: 14px;
    width: 3px;
}
.tick {
    position: absolute;
    left: 2px;
    right: 1px;
}
.tick::before, .tick::after {
    width: 2px;
    background: #82868a;
}
.hold {
    position: absolute;
    width: 19px;
    height: 1px;
    background: #53585a;
}
.hold-left {
    left: 29px;
}
.hold-right {
    right: 18px;
}
.peaks {
    display: grid;
    grid-template-columns: 1fr 1fr;
    margin-top: 11px;
    padding-top: 4px;
    height: 24px;
    text-align: center;
    font-weight: bold;
    background: #101112;
}

/* transport */
.transport {
    display: flex;
    justify-content: space-between;
    align-items: center;
    background: #34383a;
}
.transport-part {
    gap: 2px;
}
.transport s {
    width: 2px;
    height: 7px;
    margin: 0 2px;
    background: #777b7d;
}
.transport .aq {
    width: 18px;
    font-weight: normal;
}
.transport output {
    width: 58px;
    text-align: center;
    font-size: 8px;
    line-height: 13px;
    font-weight: normal;
    background: #141617;
    white-space: nowrap;
}
.transport .tempo {
    width: 44px;
    font-size: 7px;
}
.transport .click {
    width: 36px;
}
.transport .play {
    height: 15px;
    border: 1px solid #d7dadb;
}
.play button {
    width: 24px;
}
.flip {
    transform: rotate(180deg);
}
.markers b {
    width: 9px;
    height: 8px;
    background: #e6e8e9;
    color: #333;
    border-radius: 3px 3px 0 0;
}
.out-meter {
    display: flex;
    justify-content: flex-end;
    align-items: flex-end;
    gap: 1px;
    width: 37px;
    height: 13px;
    padding: 0 5px 2px;
    margin-right: 2px;
    background: #08090a;
}
.out-meter i {
    width: 3px;
    height: 8px;
    background: #76c9b8;
}
```

FILE: script.js
```
const FIRST_BAR = -0.36;
const BARS = 81.28;
const pos = bar => (bar - FIRST_BAR) / BARS * 100;
const icon = name => `<svg><use href="#i-${name}"/></svg>`;

// EQ bands
document.getElementById('eq-bands').innerHTML = ['12000Hz', '2000Hz', '800.0Hz', '100.0Hz'].map(freq =>
    `<li class="band">${icon('shelf')}</li><li>0.0dB</li><li>${freq}</li><li>1.0</li>`
).join('');

// parts: [bar from, bar to, label, colour, dark text]
// clips: [bar from, bar to, label, style, waveform]
const tracks = [
    { name: 'Seconds', color: '#f08a34', icon: 'ruler', kind: 'ruler' },
    { name: 'Tempo', color: '#050606', icon: 'note', kind: 'tempo' },
    { name: 'MARKERS', color: '#b5d352', icon: 'marker', kind: 'markers' },
    { name: 'Arranger Chain 1', color: '#7c100e', icon: 'arranger', kind: 'arranger', parts: [
        [1, 9, 'INTRO', '#efdf5b', 1], [9, 25, 'VERSE', '#dd883f', 1], [25, 33, 'PRE CHORUS', '#83389a', 0],
        [33, 49, 'CHORUS DROP', '#4a2f2d', 0], [49, 57, 'BREAKDOWN', '#6fcf9b', 1], [57, 81, 'INSTRUMENTAL', '#2e3d9a', 0]
    ] },
    { name: 'MIDI', color: '#9fcf4c', icon: 'folder', kind: 'folder' },
    { name: 'Kick', color: '#f5483f', icon: 'wave', meter: 70, clips: [[9, 26, 'Drums-03', 'red', 'kick'], [33, 81, 'Drums-04', 'red', 'kick']] },
    { name: 'Snare', color: '#ee433a', icon: 'wave', meter: 62, clips: [[9, 26, 'Drums-05', 'red', 'snare'], [33, 81, 'Drums-06', 'red', 'snare']] },
    { name: 'Linn (R)', color: '#df3b2b', icon: 'wave', meter: 34, clips: [[9, 26, 'Linn', 'red', 'thin'], [33, 50, 'Linn-01', 'red', 'thin'], [57, 81, 'Linn-02', 'red', 'thin']] },
    { name: 'Big Compressed Drums', color: '#cb3025', icon: 'wave', meter: 72, selected: true, clips: [[33, 50, 'Hangar', 'red', 'dense'], [57, 81, 'Hangar-01', 'red', 'dense']] },
    { name: '808 Hats', color: '#a82b1f', icon: 'wave', meter: 26, eq: ['', 'lime', 'blue'], clips: [[9, 25, '', 'dark', 'dense'], [33, 49, '', 'dark', 'dense'], [57, 81, '', 'dark', 'dense']] },
    { name: 'Hats DLY', color: '#8b1813', icon: 'FX', meter: 14, value: '0.00', eq: ['blue', '', ''], line: 27 },
    { name: '>DRUMS', color: '#7a0f0d', icon: 'group', meter: 58, value: '-8.31', eq: ['', '', ''], line: 52 },
    { name: 'Moog Bass (R)', color: '#2d4ba6', icon: 'wave', meter: 50, mono: true, clips: [[33, 50, 'Moog Bass_01-01', 'blue', 'bass'], [57, 81, 'Moog Bass_01-02', 'blue', 'bass']] },
    { name: 'Bass Licks', color: '#3a35a0', icon: 'wave', meter: 0, clips: [[29, 32.8, 'Moog Bass_01', 'blue', 'bass']] },
    { name: 'MOOG BASS', color: '#3a3296', icon: 'group', meter: 50, value: '-4.95', eq: ['blue', 'lime', ''], line: 43 },
    { name: 'Sub37 Seq', color: '#39308f', icon: 'wave', meter: 46, mono: true, clips: [[0, 25, 'Sub37 Seq_03', 'indigo', 'bass'], [31, 81, 'Sub37 Seq_03', 'indigo', 'bass']] },
    { name: 'SEQ Stereo', color: '#3c319c', icon: 'group', meter: 52, value: '-7.48', eq: ['blue', 'lime', ''], line: 60 }
];

function trackBody(t) {
    const name = `<b>${t.name}</b>`;
    const ms = '<div class="ms"><button>M</button><button>S</button></div>';
    if (t.kind === 'ruler') {
        return [name, ''];
    }
    if (t.kind === 'tempo') {
        return [`<div class="ms"><button class="gold">O</button><button>${icon('lock')}</button></div>`,
            `<div class="track-line"><b class="tempo-name">Tempo</b><button class="wide">124.000</button><button>I-I</button><button class="wide jump">Jump</button></div>`];
    }
    if (t.kind === 'markers') {
        return ['<div class="ms"><button>⁘</button><button>⁘</button></div>',
            `<div class="track-line">${name}</div><div class="track-line"><button class="wide">Locate</button><button class="wide">Cycle</button><button class="wide">Zoom</button></div>`];
    }
    if (t.kind === 'arranger') {
        return [`<div class="ms"><button>${icon('e')}</button><button>◢</button></div>`,
            `<div class="track-line"><select aria-label="Chain"><option>${t.name} *</option></select><select aria-label="Event"><option>-</option></select><button class="gold">${icon('note')}</button></div>`];
    }
    if (t.kind === 'folder') {
        return [ms, `<div class="track-line">${name}</div><div class="track-line"><button>●</button><button>◀</button><button>☰</button></div>`];
    }
    const colors = t.eq || ['', '', ''];
    const eq = `<div class="btns"><button class="${colors[0]}">${icon('eq')}</button><button class="${colors[1]}">${icon('eq')}</button><button class="${colors[2]}">${icon('lane')}</button></div>`;
    const rw = `<div class="btns"><button>R</button><button>W</button></div><div class="btns"><button>${icon('e')}</button><button>${icon(t.mono ? 'o' : 'oo')}</button></div>`;
    if (t.value) {
        return [ms, `<div class="track-line">${name}${eq}</div><div class="track-line">${rw}<span class="cell val">${t.value}</span><span class="cell">Volume</span></div>`];
    }
    return [ms, `<div class="track-line">${name}</div><div class="track-line">${rw}${eq}</div>`];
}

document.getElementById('tracks').innerHTML = tracks.map(t => {
    const [ms, body] = trackBody(t);
    return `<div class="track ${t.selected ? 'selected' : ''}">
        <div class="track-color" style="background:${t.color}">${t.icon === 'FX' ? 'FX' : icon(t.icon)}</div>
        <div>${ms}</div><div>${body}</div>
        <div class="track-meter"><i style="height:${t.meter || 0}%"></i></div>
    </div>`;
}).join('');

// Waveforms, drawn as two channels in a box 20 high
function wave(type, bars) {
    const w = Math.round(bars * 10);
    let d = '';
    [6, 14].forEach(y => {
        d += `M0 ${y}H${w}`;
        for (let x = 4, n = 0; x < w; n++) {
            if (type === 'kick') {
                d += `M${x} ${y - 2}l2 2l-2 2z`;
                x += 10;
            } else if (type === 'snare') {
                d += `M${x} ${y - 3}v6M${x + 1} ${y - 1}v2`;
                x += 10;
            } else if (type === 'dense') {
                const h = 1 + (n * 7 % 5) / 2;
                d += `M${x} ${y - h / 2}v${h}`;
                x += 2;
            } else if (type === 'thin') {
                d += `M${x} ${y}h6v1`;
                x += 10;
            } else {
                x += w;
            }
        }
    });
    if (type === 'bass') {
        d = `M0 10H${w}`;
    }
    return `<svg viewBox="0 0 ${w} 20" preserveAspectRatio="none"><path d="${d}"/></svg>`;
}

const span = (a, b) => `left:${pos(a)}%;width:${(b - a) / BARS * 100}%`;

function laneContent(t) {
    if (t.kind === 'ruler') {
        let out = '';
        for (let s = 0; s <= 150; s += 10) {
            const label = s < 60 ? s : Math.floor(s / 60) + ':' + String(s % 60).padStart(2, '0');
            out += `<span style="left:${pos(0.03 + s * 0.516)}%">${label}</span>`;
        }
        return out;
    }
    if (t.kind === 'tempo') {
        return '<div class="automation tempo-line" style="top:60%"></div>';
    }
    if (t.kind === 'folder') {
        return `<div class="clip midi-part" style="${span(0, 81)}"><span>MIDI</span>
            <i style="left:2%;width:9%;top:10%"></i><i style="left:11%;width:45%;top:28%"></i>
            <i style="left:40%;right:0;top:50%"></i><i class="navy" style="left:0;right:0;top:66%"></i></div>`;
    }
    let out = '';
    (t.parts || []).forEach(([a, b, label, color, dark]) => {
        out += `<div class="clip part ${dark ? 'shade' : ''}" style="${span(a, b)};--part:${color}"><span>${label}</span></div>`;
    });
    (t.clips || []).forEach(([a, b, label, style, type]) => {
        out += `<div class="clip ${style}" style="${span(a, b)}">${wave(type, b - a)}<span>${label}</span></div>`;
    });
    if (t.line) {
        out += `<div class="automation" style="top:${t.line}%"></div>`;
    }
    return out;
}

let ruler = `<div class="cycle" style="${span(33, 49)}"></div>`;
let grid = `<div class="cycle-area" style="${span(33, 49)}"></div>`;
for (let bar = 1; bar < 81; bar += 2) {
    ruler += `<span style="left:${pos(bar)}%">${bar}</span>`;
    grid += `<div class="gridline" style="left:${pos(bar)}%"></div>`;
}
document.getElementById('bar-ruler').innerHTML = ruler;
document.getElementById('lanes').innerHTML = grid +
    tracks.map(t => `<div class="lane ${t.kind === 'ruler' ? 'seconds' : ''}">${laneContent(t)}</div>`).join('') +
    `<div class="playhead" style="left:${pos(36.2)}%"></div>`;

// num, name, pan, fader position, level, peak, meter left, meter right, colour, kind
const channels = [
    [5, 'Kick', 'C', 81, '0.00', '-8.4', 62, 62, '#f2453d'],
    [6, 'Snare', 'C', 81, '0.00', '-4.5', 58, 58, '#ec4239'],
    [7, 'Linn (R)', 'C', 81, '0.00', '-16.0', 34, 33, '#df3b2c'],
    [8, 'Big\nCompress', 'C', 81, '0.00', '-5.7', 70, 71, '#cb3025', 'sel'],
    [9, '808 Hats', 'R36', 23, '-22.3', '-22.7', 22, 28, '#ab2c20'],
    [10, 'Hats\nDLY', 'R6', 81, '0.00', '-30.5', 14, 13, '#8d1914', 'fx'],
    [11, '>DRUMS', 'C', 51, '-8.31', '-10.2', 59, 60, '#7a0f0d', 'group'],
    [13, 'Moog\nBass (R)', 'C', 81, '0.00', '-13.2', 48, 48, '#2d4ba6', 'mono'],
    [14, 'Bass\nLicks', 'R58', 96, '4.77', '-oo', 0, 0, '#3a35a0'],
    [15, 'MOOG\nBASS', 'C', 61, '-4.95', '-13.1', 51, 51, '#3a3296', 'group'],
    [16, 'Sub37\nSeq', 'C', 75, '-1.06', '-17.0', 46, 46, '#39308f', 'mono'],
    [17, 'SEQ\nStereo', 'C', 53, '-7.48', '-18.1', 44, 46, '#3c319c', 'group'],
    [18, 'Trigger\nHorizon', 'C', 81, '0.00', '-oo', 0, 0, '#87379a'],
    [19, 'FM\nWarm', 'C', 97, '5.03', '-23.6', 2, 2, '#87379a'],
    [20, 'SEM V2\n01 (R)', 'R61', 81, '0.00', '-60.5', 0, 0, '#87379a'],
    [21, 'Soft\nSynth', 'R29', 81, '0.00', '-13.0', 45, 53, '#87379a'],
    [22, 'Pluck', 'L67', 81, '0.00', '-7.9', 52, 35, '#87379a'],
    [23, 'Modern\nSynth (R)', 'R62', 81, '0.00', '-10.9', 28, 54, '#87379a'],
    [24, 'Jupiter', 'R', 81, '0.00', '-12.4', 0, 59, '#87379a'],
    [25, 'Dom\nStabs', 'C', 81, '0.00', '-9.9', 60, 62, '#87379a'],
    [26, 'CS80\nNew', 'R97', 68, '-2.87', '-oo', 0, 0, '#87379a'],
    [27, 'CS80\nStereo', 'L79', 68, '-2.91', '-18.1', 3, 2, '#87379a'],
    [28, 'CS\nDoubler', 'L51', 85, '1.63', '-0.4', 51, 39, '#87379a'],
    [29, '>SYNTH', 'C', 57, '-6.37', '-6.9', 55, 61, '#7a2f90', 'group'],
    [30, 'GTR 1', 'C', 30, '-17.2', '-oo', 0, 0, '#44711f'],
    [31, 'GTR 2', 'R70', 48, '-9.36', '-oo', 0, 0, '#44711f'],
    [32, 'GTR 3', 'L', 74, '-1.33', '-9.8', 70, 0, '#44711f'],
    [33, 'GTR 4', 'R', 73, '-1.61', '-10.2', 0, 67, '#44711f'],
    [34, 'Alt\nGTRS', 'C', 48, '-9.11', '-17.9', 51, 52, '#f3e04c', 'group'],
    [37, 'Vibr Gtr', 'L76', 54, '-7.35', '-oo', 0, 0, '#4d7e28'],
    [38, 'DLY\nGTR', 'L31', 60, '-5.15', '-oo', 0, 0, '#44711f'],
    [39, 'TREM\nGTRS 1', 'L', 47, '-9.76', '-14.4', 53, 0, '#8fca42'],
    [40, 'TREM\nGTRS 2', 'R', 47, '-9.96', '-14.1', 0, 53, '#8fca42'],
    [41, 'Trem\nGTRS', 'C', 47, '-9.65', '-22.7', 37, 37, '#8fca42', 'group'],
    [43, 'Ooh L\n(R)', 'L', 81, '0.00', '-6.2', 40, 0, '#c2602b', 'mono']
];

function panBar(pan) {
    if (pan === 'C') {
        return '<i class="r"></i>';
    }
    const amount = (Number(pan.slice(1)) || 100) * 0.42;
    return `<i class="${pan[0].toLowerCase()}" style="width:${amount}%"></i>`;
}

document.getElementById('channels').innerHTML = channels.map(([num, name, pan, fader, level, peak, left, right, color, kind]) => {
    const bus = kind === 'group' || kind === 'fx';
    const dark = ['#f3e04c', '#8fca42'].includes(color);
    return `<div class="channel ${kind === 'sel' ? 'selected' : ''}">
        <div class="pan">${panBar(pan)}${pan}</div>
        <div class="keys"><button>M</button><button>S</button><button></button><button>${icon('e')}</button></div>
        <div class="strip">
            <input class="fader ${kind === 'group' ? 'group-fader' : kind || ''}" type="range" min="0" max="102" value="${fader}" aria-label="${name.replace('\n', ' ')} volume">
            <div class="meter"><i style="height:${left}%"></i><i style="height:${right}%"></i></div>
        </div>
        <div class="values"><b>${level}</b><span>${peak}</span></div>
        <div class="keys"><button class="${num === 41 ? 'read' : ''}">R</button><button>W</button>
            <button>${bus ? '' : icon('left')}</button><button class="${kind === 'sel' ? 'rec' : ''}">${bus ? '' : icon('dot')}</button></div>
        <div class="chan-num">${icon(kind === 'mono' ? 'o' : 'oo')}${num}</div>
        <div class="chan-name" style="background:${color};color:${dark ? '#26300f' : '#f2f2f2'}">${name}</div>
    </div>`;
}).join('');

// Master meter scale, percent down the meter
const marks = { 0: 0, 5: 12.3, 10: 24.5, 15: 36.7, 20: 49, 25: 59.2, 30: 68.2, 35: 76.3, 40: 83.1, 50: 92.8, 60: 96.8 };
let scale = '';
for (let db = 1; db < 20; db++) {
    scale += `<div class="tick" style="top:${db * 2.45}%"></div>`;
}
Object.entries(marks).forEach(([db, top]) => {
    scale += `<div class="mark" style="top:${top}%"><span>${db}</span><span>${db}</span></div>`;
});
[['left', 8], ['right', 9.5], ['right', 13.4], ['left', 26.6]].forEach(([side, top]) => {
    scale += `<div class="hold hold-${side}" style="top:${top}%"></div>`;
});
document.getElementById('master-meter').insertAdjacentHTML('beforeend', scale);
```
